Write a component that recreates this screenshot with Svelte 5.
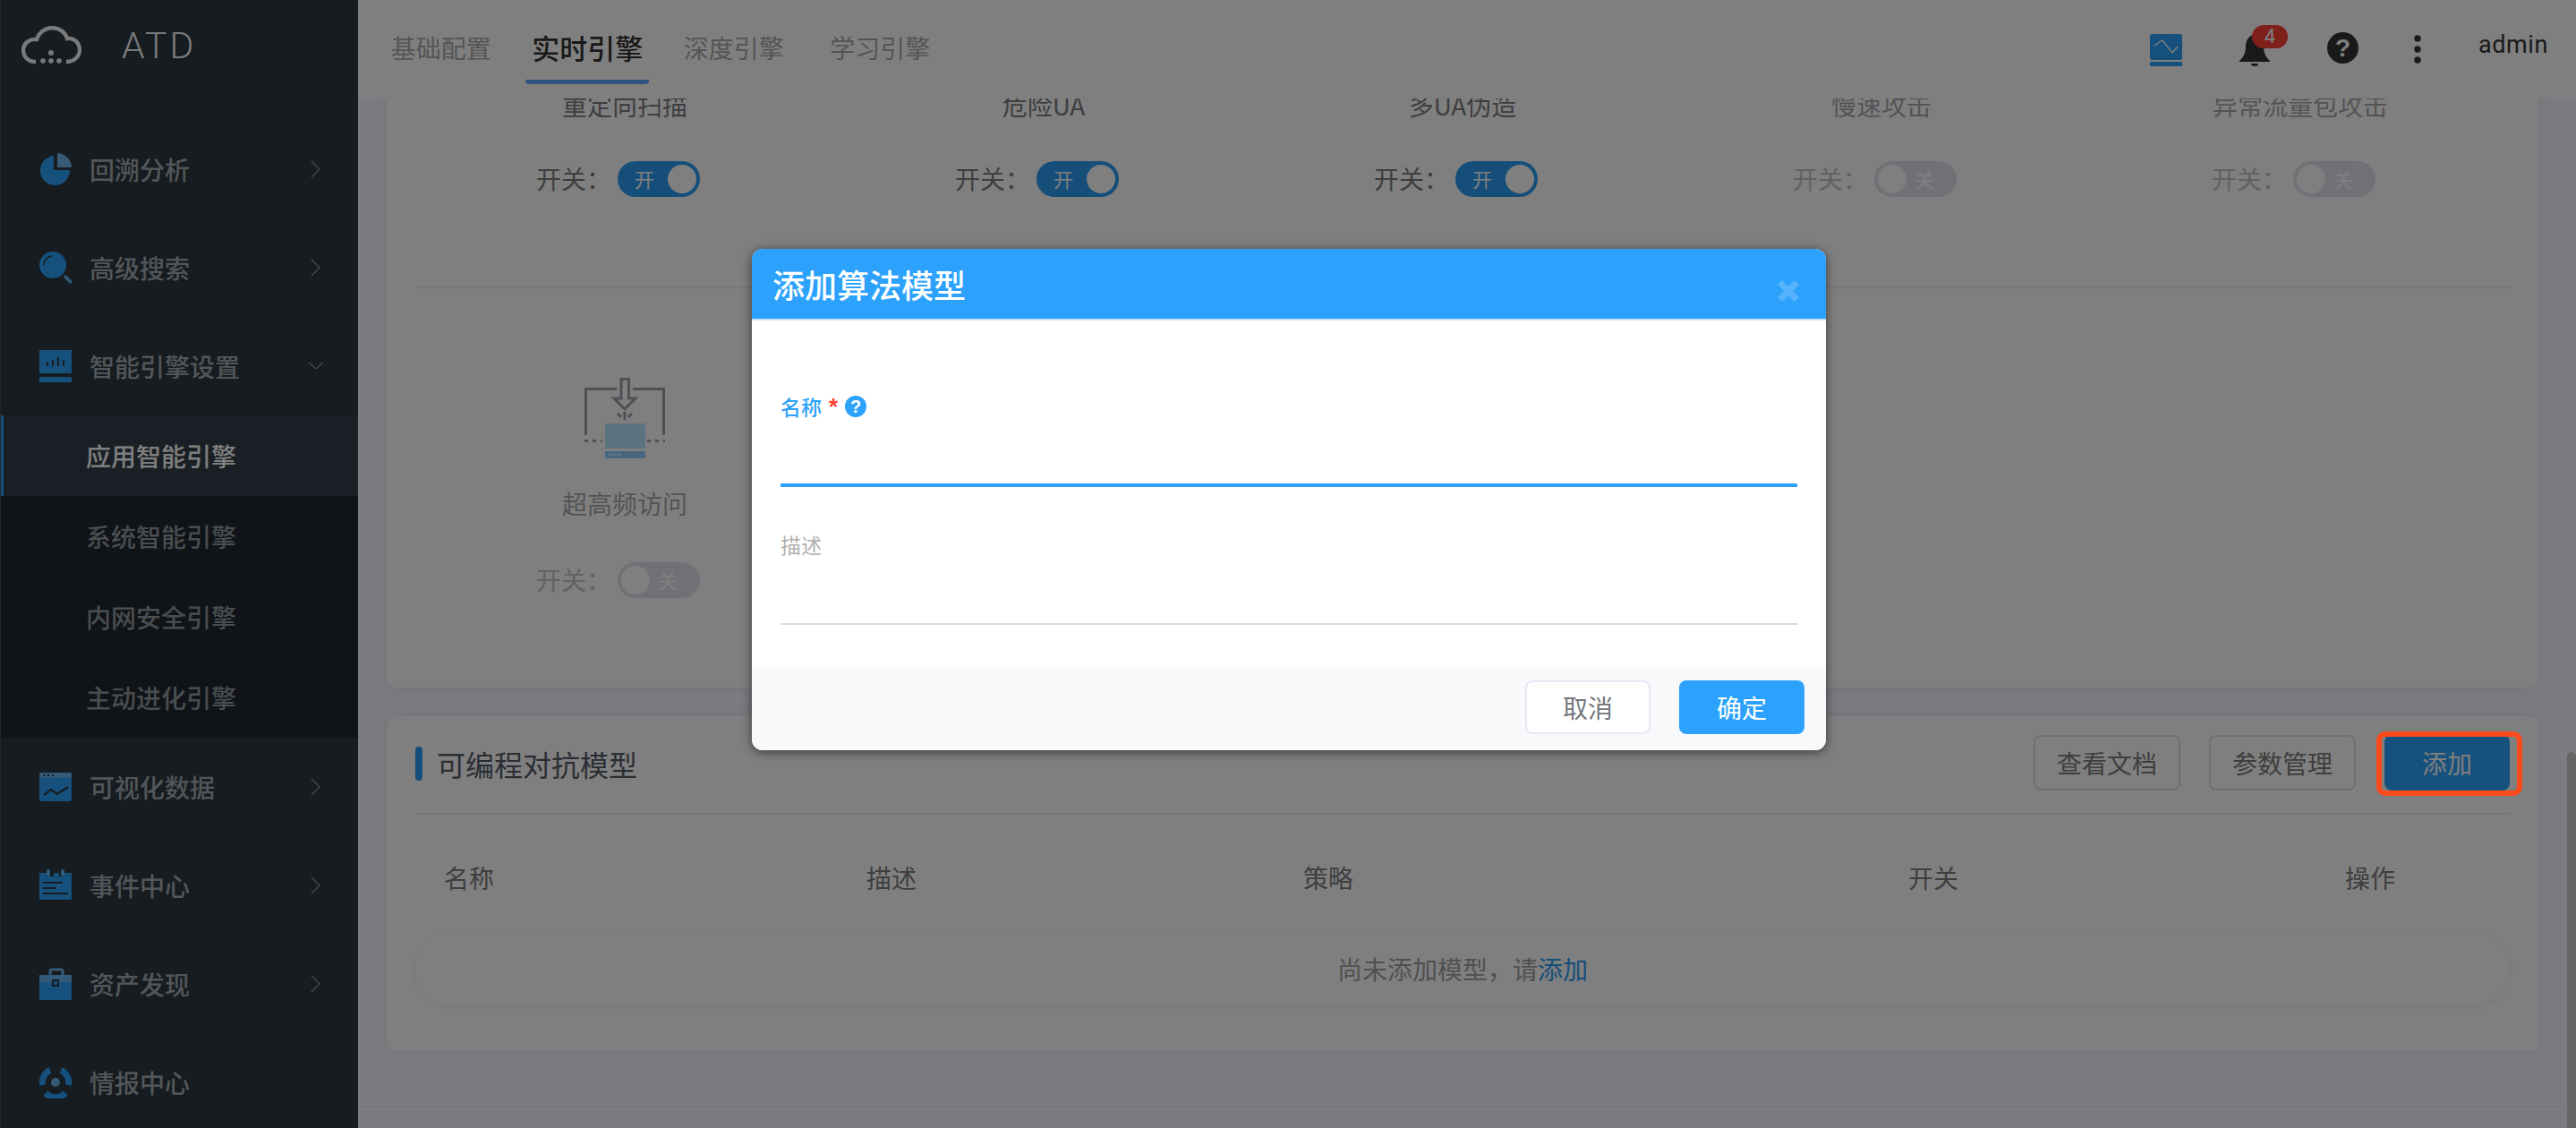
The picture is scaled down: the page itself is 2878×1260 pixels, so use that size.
<script>
  const menuTop = [
    { name: '回溯分析', icon: 'pie' },
    { name: '高级搜索', icon: 'search' },
    { name: '智能引擎设置', icon: 'engine', open: true }
  ];
  const subMenu = [
    { name: '应用智能引擎', active: true },
    { name: '系统智能引擎' },
    { name: '内网安全引擎' },
    { name: '主动进化引擎' }
  ];
  const menuBottom = [
    { name: '可视化数据', icon: 'visual', arrow: true },
    { name: '事件中心', icon: 'event', arrow: true },
    { name: '资产发现', icon: 'asset', arrow: true },
    { name: '情报中心', icon: 'intel', arrow: false }
  ];
  const tabs = ['基础配置', '实时引擎', '深度引擎', '学习引擎'];
  const engines = [
    { name: '重定向扫描', on: true },
    { name: '危险UA', on: true },
    { name: '多UA伪造', on: true },
    { name: '慢速攻击', on: false },
    { name: '异常流量包攻击', on: false }
  ];
  const columns = ['名称', '描述', '策略', '开关', '操作'];
</script>

{#snippet menuIcon(name)}
  <svg class="menu-icon" width="36" height="36" viewBox="0 0 36 36">
    {#if name === 'pie'}
      <path fill="#6fb6ea" d="M20 0A17 16 0 0 1 36 16H20Z" />
      <path fill="#2ca2fc" d="M16 3A16.5 16.5 0 1 0 34 19H16Z" />
    {:else if name === 'search'}
      <ellipse fill="#2ca2fc" cx="15" cy="15" rx="15" ry="15" />
      <path fill="none" stroke="#2e3840" stroke-width="1.6" d="M5 15A10 10 0 0 1 14 5" />
      <path fill="none" stroke="#5fb6f5" stroke-width="3.4" stroke-linecap="round" d="M29 28L35 34" />
    {:else if name === 'engine'}
      <rect fill="#2ca2fc" x="0" y="0" width="36" height="26" />
      <rect fill="#2ca2fc" x="0" y="30" width="36" height="6" rx="1" />
      <path stroke="#2e3840" stroke-width="2" d="M9 18V13M15 18V11M21 18V8M27 18V11" />
    {:else if name === 'visual'}
      <rect fill="#2ca2fc" x="0" y="2" width="36" height="32" rx="2" />
      <path fill="#67b5ef" d="M2 2H34A2 2 0 0 1 36 4V8H0V4A2 2 0 0 1 2 2Z" />
      <path fill="#2e3840" d="M4 4h2v2H4zM9 4h2v2H9zM14 4h2v2h-2z" />
      <path fill="none" stroke="#2e3840" stroke-width="2.2" d="M5 27L13 21L20 26L32 18" />
    {:else if name === 'event'}
      <path fill="#2ca2fc" d="M0 4H8V8H16V4H22V8H28V4H36V33A1 1 0 0 1 35 34H1A1 1 0 0 1 0 33Z" />
      <rect fill="#5fb6f5" x="8" y="0" width="4" height="8" rx="2" />
      <rect fill="#5fb6f5" x="24" y="0" width="4" height="8" rx="2" />
      <path stroke="#2e3840" stroke-width="2" d="M4 15H26M4 21H18M4 27H32" />
    {:else if name === 'asset'}
      <path fill="none" stroke="#67b5ef" stroke-width="3" d="M12 8V4A2 2 0 0 1 14 2H24A2 2 0 0 1 26 4V8" />
      <rect fill="#67b5ef" x="0" y="8" width="36" height="8" />
      <rect fill="#2ca2fc" x="0" y="16" width="36" height="20" />
      <rect fill="#2e3840" x="14" y="13" width="8" height="8" />
      <rect fill="#2ca2fc" x="16" y="15" width="4" height="4" />
    {:else if name === 'intel'}
      <circle fill="#67b5ef" cx="18" cy="18" r="5" />
      <g fill="none" stroke="#2ca2fc" stroke-width="7">
        <path d="M3.5 21A15 15 0 0 1 12 4.5" />
        <path d="M24 4.5A15 15 0 0 1 32.5 21" />
        <path d="M7 30A15 15 0 0 0 29 30" />
      </g>
    {/if}
  </svg>
{/snippet}

{#snippet chevron(open)}
  <svg class="chevron" class:open width="18" height="20" viewBox="0 0 18 20">
    {#if open}
      <path fill="none" stroke="#8b949b" stroke-width="1.3" d="M1 6L9 13L17 6" />
    {:else}
      <path fill="none" stroke="#8b949b" stroke-width="1.3" d="M4 1L13 10L4 19" />
    {/if}
  </svg>
{/snippet}

{#snippet toggle(on)}
  <span class="toggle" class:on>
    <span class="toggle-text">{on ? '开' : '关'}</span>
    <span class="knob"></span>
  </span>
{/snippet}

<div class="page">
  <aside class="sidebar">
    <div class="logo">
      <svg width="67" height="43" viewBox="0 0 67 43">
        <path fill="none" stroke="#f5f5f5" stroke-width="4.4" d="M16 40C6 40 2 33 2 27C2 19 10 14 17 15C20 6 28 2 34 2C42 2 49 7 51 14C59 13 65 19 65 27C65 34 59 40 50 40" />
        <circle fill="#f5f5f5" cx="24" cy="39" r="2.8" />
        <circle fill="#f5f5f5" cx="33" cy="39" r="2.8" />
        <circle fill="#f5f5f5" cx="42" cy="39" r="2.8" />
        <circle fill="#f5f5f5" cx="33" cy="30" r="3" />
      </svg>
      <span class="logo-text">ATD</span>
    </div>
    <nav>
      {#each menuTop as item}
        <div class="menu-item">
          {@render menuIcon(item.icon)}
          <span class="menu-name">{item.name}</span>
          {@render chevron(item.open)}
        </div>
      {/each}
      <div class="submenu">
        {#each subMenu as item}
          <div class="submenu-item" class:active={item.active}>{item.name}</div>
        {/each}
      </div>
      {#each menuBottom as item}
        <div class="menu-item">
          {@render menuIcon(item.icon)}
          <span class="menu-name">{item.name}</span>
          {#if item.arrow}
            {@render chevron(false)}
          {/if}
        </div>
      {/each}
    </nav>
  </aside>

  <div class="main">
    <header class="topbar">
      <div class="tabs">
        {#each tabs as tab, i}
          <div class="tab" class:active={i === 1}><span>{tab}</span></div>
        {/each}
      </div>
      <div class="tools">
        <svg class="tool-chart" width="36" height="36" viewBox="0 0 36 36">
          <rect fill="#2ca2fc" x="0" y="0" width="36" height="29" rx="2" />
          <rect fill="#2ca2fc" x="0" y="31" width="36" height="6" rx="1" />
          <path fill="none" stroke="#fff" stroke-width="1.4" d="M5 13L14 7L25 21L31 14" />
        </svg>
        <div class="bell">
          <svg width="34" height="36" viewBox="0 0 34 36">
            <path fill="#333" d="M17 1C24 1 27 8 27 14C27 22 30 26 34 30V31H0V30C4 26 7 22 7 14C7 8 10 1 17 1Z" />
            <path fill="#333" d="M13 33H21A4 3 0 0 1 13 33Z" />
          </svg>
          <span class="badge">4</span>
        </div>
        <svg class="tool-help" width="35" height="35" viewBox="0 0 35 35">
          <circle fill="#333" cx="17.5" cy="17.5" r="17.5" />
          <text x="17.5" y="27" text-anchor="middle" class="help-mark">?</text>
        </svg>
        <svg class="tool-dots" width="8" height="32" viewBox="0 0 8 32">
          <circle fill="#333" cx="4" cy="4" r="3.7" />
          <circle fill="#333" cx="4" cy="16" r="3.7" />
          <circle fill="#333" cx="4" cy="28" r="3.7" />
        </svg>
        <span class="user">admin</span>
      </div>
    </header>

    <div class="scroll">
      <div class="scrolled">
        <section class="card engines">
          <div class="engine-row">
            {#each engines as item}
              <div class="engine" class:off={!item.on}>
                <div class="engine-icon"></div>
                <div class="engine-name">{item.name}</div>
                <div class="switch-line">
                  <span class="switch-label">开关：</span>
                  {@render toggle(item.on)}
                </div>
              </div>
            {/each}
          </div>
          <div class="engine-row second">
            <div class="engine off">
              <svg class="engine-icon" width="90" height="90" viewBox="0 0 90 90">
                <g fill="none" stroke="#9aa0ab" stroke-width="3">
                  <path d="M1.5 64V12.5H36M54 12.5H88.5V64" />
                  <path d="M41 1.5H49.5V23H57L45 35L33 23H41Z" />
                  <path d="M45 38V47M37 40L41 44M53 40L49 44" />
                  <path stroke-dasharray="4 5" d="M0 70.5H20M70 70.5H90" />
                </g>
                <rect fill="#b8e4ff" x="23" y="51" width="45" height="28" />
                <rect fill="#90ceff" x="23" y="82" width="45" height="8" />
                <path fill="#d6effc" d="M27 85h3v2h-3zM32 85h3v2h-3zM37 85h3v2h-3z" />
              </svg>
              <div class="engine-name">超高频访问</div>
              <div class="switch-line">
                <span class="switch-label">开关：</span>
                {@render toggle(false)}
              </div>
            </div>
          </div>
        </section>

        <section class="card models">
          <div class="models-head">
            <h2><i></i>可编程对抗模型</h2>
            <div class="head-actions">
              <button class="btn">查看文档</button>
              <button class="btn">参数管理</button>
              <button class="btn primary">添加</button>
            </div>
          </div>
          <div class="table-head">
            {#each columns as col}
              <span>{col}</span>
            {/each}
          </div>
          <div class="empty-row">尚未添加模型，请<span class="link">添加</span></div>
        </section>

        <div class="footer-line"></div>
      </div>
      <div class="scrollbar"></div>
    </div>
  </div>

  <div class="overlay">
    <div class="modal">
      <div class="modal-head">
        <span>添加算法模型</span>
        <svg class="close" width="24" height="26" viewBox="0 0 24 26">
          <path fill="none" stroke="#55b4fd" stroke-width="7" stroke-linecap="square" d="M5 6L19 20M19 6L5 20" />
        </svg>
      </div>
      <div class="modal-body">
        <div class="field focus">
          <label for="model-name">名称 <b>*</b> <span class="hint">?</span></label>
          <input id="model-name" type="text" />
        </div>
        <div class="field">
          <label for="model-desc">描述</label>
          <input id="model-desc" type="text" />
        </div>
      </div>
      <div class="modal-foot">
        <button class="modal-btn">取消</button>
        <button class="modal-btn ok">确定</button>
      </div>
    </div>
  </div>

  <div class="mark"></div>
</div>

<style>
  :global(body) {
    margin: 0;
    font-family: "Noto Sans CJK SC", "Noto Sans", sans-serif;
  }

  .page {
    position: relative;
    display: flex;
    width: 2878px;
    height: 1260px;
    overflow: hidden;
    background: #f6f8ff;
  }

  /* sidebar */
  .sidebar {
    flex: none;
    width: 399px;
    border-left: 1px solid #46505a;
    background: #2e3840;
    overflow: hidden;
  }

  .logo {
    display: flex;
    align-items: center;
    height: 134px;
    padding: 0 0 34px 23px;
    box-sizing: border-box;
  }

  .logo-text {
    margin: 2px 0 0 45px;
    font-family: Roboto, sans-serif;
    font-size: 41px;
    font-weight: 300;
    letter-spacing: 3px;
    color: #f5f5f5;
  }

  .menu-item {
    display: flex;
    align-items: center;
    height: 110px;
    padding-left: 43px;
    box-sizing: border-box;
    position: relative;
  }

  .menu-name {
    margin-left: 20px;
    font-size: 28px;
    font-weight: 500;
    color: #a4acb2;
  }

  .chevron {
    position: absolute;
    left: 343px;
    top: 45px;
  }

  .submenu {
    background: #202830;
  }

  .submenu-item {
    height: 90px;
    line-height: 90px;
    padding-left: 95px;
    font-size: 28px;
    font-weight: 500;
    color: #959a9f;
  }

  .submenu-item.active {
    margin-left: -1px;
    padding-left: 92px;
    border-left: 4px solid #2ca2fc;
    background: #343f4a;
    color: #fff;
  }

  /* main */
  .main {
    flex: 1;
    min-width: 0;
    display: flex;
    flex-direction: column;
  }

  .topbar {
    position: relative;
    z-index: 2;
    flex: none;
    display: flex;
    justify-content: space-between;
    height: 110px;
    background: #fff;
  }

  .tabs {
    display: flex;
    padding-left: 11px;
  }

  .tab {
    width: 163.5px;
    display: flex;
    justify-content: center;
    font-size: 28px;
    color: #aaa;
  }

  .tab span {
    height: 89px;
    line-height: 106px;
  }

  .tab.active {
    font-size: 31px;
    font-weight: 500;
    color: #333;
  }

  .tab.active span {
    padding: 0 7px;
    border-bottom: 5px solid #5fa8ff;
    border-radius: 0 0 4px 4px;
  }

  .tools {
    display: flex;
    align-items: flex-start;
    gap: 64px;
    padding-right: 31px;
  }

  .tool-chart {
    margin-top: 38px;
    margin-left: 2px;
  }

  .bell {
    position: relative;
    margin-top: 38px;
    height: 36px;
  }

  .badge {
    position: absolute;
    left: 14px;
    top: -10px;
    width: 40px;
    height: 26px;
    border-radius: 13px;
    background: #fe3e34;
    color: #fff;
    font-family: Roboto, sans-serif;
    font-size: 22px;
    line-height: 26px;
    text-align: center;
  }

  .tool-help {
    margin-top: 36px;
    margin-right: -2px;
  }

  .help-mark {
    font-family: "Liberation Sans", sans-serif;
    font-size: 28px;
    font-weight: 700;
    fill: #fff;
  }

  .tool-dots {
    margin-top: 39px;
  }

  .user {
    margin-top: 32px;
    font-family: Roboto, sans-serif;
    font-size: 27px;
    line-height: 36px;
    letter-spacing: 0.6px;
    color: #333;
  }

  .scroll {
    position: relative;
    flex: 1;
    min-height: 0;
    overflow: hidden;
    padding: 0 42px 0 32px;
  }

  .scrolled {
    margin-top: -236px;
  }

  .scrollbar {
    position: absolute;
    top: 730px;
    right: 0;
    bottom: 0;
    width: 10px;
    border-radius: 5px 5px 0 0;
    background: #cbcbcb;
  }

  .card {
    background: #fff;
    border-radius: 12px;
    box-shadow: 0 0 14px rgba(120, 130, 170, 0.14);
  }

  .engines {
    padding: 0 32px;
  }

  .engine-row {
    display: grid;
    grid-template-columns: repeat(5, 1fr);
    padding: 100px 0;
  }

  .engine-row.second {
    border-top: 2px solid #eceef2;
  }

  .engine {
    display: flex;
    flex-direction: column;
    align-items: center;
  }

  .engine-icon {
    display: block;
    width: 90px;
    height: 90px;
  }

  .engine-name {
    margin-top: 33px;
    height: 40px;
    line-height: 40px;
    font-size: 28px;
    color: #7c7c82;
  }

  .second .engine-name {
    margin-top: 30px;
  }

  .engine.off .engine-name {
    color: #a8a8ac;
  }

  .switch-line {
    display: flex;
    align-items: center;
    height: 40px;
    margin-top: 43px;
    margin-right: 15px;
  }

  .second .switch-line {
    margin-top: 46px;
  }

  .switch-label {
    width: 91px;
    margin-top: -3px;
    font-size: 28px;
    line-height: 40px;
    color: #7c7c7c;
  }

  .engine.off .switch-label {
    color: #c4c4c4;
  }

  .toggle {
    position: relative;
    display: block;
    width: 92px;
    height: 40px;
    border-radius: 20px;
    background: #dfe3ec;
  }

  .toggle.on {
    background: #2c9cf4;
  }

  .knob {
    position: absolute;
    top: 4px;
    left: 4px;
    width: 32px;
    height: 32px;
    border-radius: 50%;
    background: #fff;
  }

  .toggle.on .knob {
    left: 56px;
  }

  .toggle-text {
    position: absolute;
    left: 45px;
    top: -1px;
    font-size: 22px;
    line-height: 40px;
    color: #fff;
  }

  .toggle.on .toggle-text {
    left: 19px;
  }

  .models {
    margin-top: 32px;
    padding: 0 32px 52px;
  }

  .models-head {
    display: flex;
    align-items: center;
    justify-content: space-between;
    height: 110px;
    padding-bottom: 4px;
    box-sizing: border-box;
    border-bottom: 2px solid #eeeff2;
  }

  h2 {
    display: flex;
    align-items: center;
    margin: 2px 0 0;
    font-size: 32px;
    font-weight: 400;
    color: #555c68;
  }

  h2 i {
    width: 8px;
    height: 38px;
    margin-right: 16px;
    border-radius: 4px;
    background: #2c9cf4;
  }

  .head-actions {
    display: flex;
    gap: 32px;
  }

  .btn {
    width: 164px;
    height: 62px;
    padding: 0;
    border: 2px solid #dde0ec;
    border-radius: 8px;
    background: #fff;
    font-family: inherit;
    font-size: 28px;
    color: #7c7c7c;
  }

  .btn.primary {
    width: 140px;
    border: none;
    background: #2ca2fc;
    color: #fff;
  }

  .table-head {
    display: grid;
    grid-template-columns: 472px 488px 676px 488px 1fr;
    height: 120px;
    padding: 10px 0 2px 32px;
    align-items: center;
    font-size: 28px;
    color: #7c7c80;
  }

  .empty-row {
    height: 80px;
    line-height: 80px;
    border-radius: 40px;
    text-align: center;
    font-size: 28px;
    color: #a0a0a0;
    box-shadow: 0 2px 10px rgba(120, 130, 170, 0.12);
  }

  .link {
    color: #2c9cf4;
  }

  .footer-line {
    margin: 61px -42px 0 -32px;
    border-top: 2px solid #eceef2;
  }

  /* dialog */
  .overlay {
    position: absolute;
    inset: 0;
    z-index: 5;
    display: flex;
    justify-content: center;
    align-items: flex-start;
    padding-top: 278px;
    background: rgba(0, 0, 0, 0.5);
  }

  .modal {
    display: flex;
    flex-direction: column;
    width: 1200px;
    height: 560px;
    margin-left: 2px;
    border-radius: 12px;
    overflow: hidden;
    background: #fff;
    box-shadow: 0 2px 12px rgba(0, 0, 0, 0.55);
  }

  .modal-head {
    position: relative;
    flex: none;
    height: 78px;
    padding-left: 23px;
    border-bottom: 2px solid #c9e2f5;
    background: #2ca2fc;
    font-size: 36px;
    font-weight: 500;
    line-height: 78px;
    color: #fff;
  }

  .close {
    position: absolute;
    right: 30px;
    top: 34px;
  }

  .modal-body {
    flex: 1;
    padding: 79px 32px 0;
  }

  .field {
    margin-bottom: 47px;
  }

  .field label {
    display: flex;
    align-items: center;
    gap: 8px;
    height: 34px;
    font-size: 23px;
    color: #b0b0b0;
  }

  .field.focus label {
    font-weight: 500;
    color: #2ca2fc;
  }

  .field b {
    color: #ff4438;
    font-family: "Liberation Sans", sans-serif;
    font-size: 26px;
    line-height: 34px;
  }

  .hint {
    width: 24px;
    height: 24px;
    border-radius: 50%;
    background: #2ca2fc;
    color: #fff;
    font-family: "Liberation Sans", sans-serif;
    font-size: 20px;
    font-weight: 700;
    line-height: 24px;
    text-align: center;
  }

  .field input {
    display: block;
    width: 100%;
    height: 73px;
    padding: 0;
    box-sizing: border-box;
    border: none;
    border-bottom: 2px solid #d9dadd;
    outline: none;
    background: transparent;
  }

  .field.focus input {
    height: 73px;
    border-bottom: 4px solid #2ca2fc;
  }

  .modal-foot {
    flex: none;
    display: flex;
    justify-content: flex-end;
    gap: 32px;
    height: 92px;
    padding: 14px 24px 0;
    box-sizing: border-box;
    background: #f8f9fb;
  }

  .modal-btn {
    width: 140px;
    height: 60px;
    padding: 0;
    border: 2px solid #e6e9f3;
    border-radius: 8px;
    background: #fff;
    font-family: inherit;
    font-size: 28px;
    color: #74777c;
  }

  .modal-btn.ok {
    border: none;
    background: #2ca2fc;
    color: #fff;
  }

  /* red annotation drawn on top of the screenshot */
  .mark {
    position: absolute;
    z-index: 6;
    left: 2655px;
    top: 817px;
    width: 163px;
    height: 72px;
    box-sizing: border-box;
    border: 6px solid #fc4a1c;
    border-radius: 10px;
  }
</style>
